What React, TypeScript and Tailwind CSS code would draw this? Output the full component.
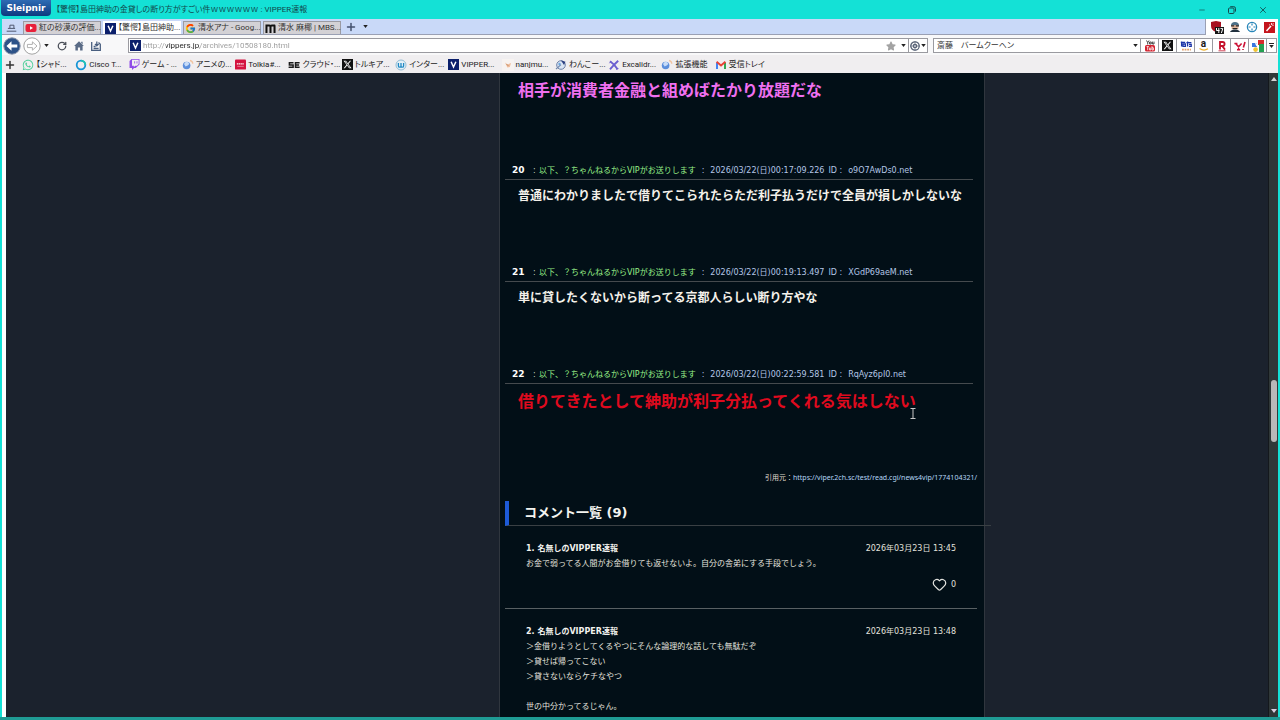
import React from 'react';
import clsx from 'clsx';
import { FcGoogle } from 'react-icons/fc';
import { FaTwitch, FaWhatsapp, FaStar } from 'react-icons/fa';
import { FaXTwitter } from 'react-icons/fa6';
import { Heart, Minus, Plus, RotateCw, X } from 'lucide-react';

type Tab = { title: string; icon: React.ReactNode; active?: boolean };
type Post = { no: number; date: string; id: string; text: string; tone: string };
type Comment = { no: number; date: string; lines: string[]; likes?: number };

function YouTubeIcon() {
  return (
    <svg viewBox="0 0 12 12" className="size-3 shrink-0">
      <rect x="0.5" y="2" width="11" height="8" rx="2" fill="#e8203a" />
      <path d="M5 4.2v3.6L8 6z" fill="#fff" />
    </svg>
  );
}

function VipperIcon() {
  return (
    <svg viewBox="0 0 12 12" className="size-[11px] shrink-0">
      <rect width="12" height="12" fill="#0b1f6b" />
      <path d="M3.4 3 6 8.8l2.6-5.8" fill="none" stroke="#fff" strokeWidth="1.6" />
    </svg>
  );
}

function MbsIcon() {
  return (
    <svg viewBox="0 0 12 12" className="size-[11px] shrink-0">
      <path d="M1.6 11V2.5M6 11V4M10.4 11V2.5M.5 2.6h4.2q1.3 0 1.3 1.6 0-1.6 1.5-1.6h3.6" fill="none" stroke="#111" strokeWidth="2.2" />
    </svg>
  );
}

function RingIcon() {
  return (
    <svg viewBox="0 0 12 12" className="size-3 shrink-0">
      <circle cx="6" cy="6" r="4.3" fill="none" stroke="#1695d6" strokeWidth="1.8" />
      <path d="M6 1.7a4.3 4.3 0 0 1 4.3 4.3" fill="none" stroke="#1fc3b4" strokeWidth="1.8" />
    </svg>
  );
}

function GlobeIcon() {
  return (
    <svg viewBox="0 0 12 12" className="size-3 shrink-0">
      <circle cx="4.6" cy="6.5" r="3.8" fill="#5c8fdc" />
      <path d="M2 5q2-3.6 4.4-1.6T3.6 7.6z" fill="#c7dcf8" />
      <path d="M8 1.5q2.5.4 2.8 3.2" fill="none" stroke="#f2c4a0" strokeWidth="1.3" />
    </svg>
  );
}

function RedCardIcon() {
  return (
    <svg viewBox="0 0 12 12" className="size-[11px] shrink-0">
      <rect y="0.5" width="12" height="11" rx="1" fill="#d4123f" />
      <path d="M2 5.2h8" stroke="#fff" strokeWidth="1.4" strokeDasharray="1.5 .5" />
      <path d="M2.5 8h7" stroke="#f0a0b4" strokeWidth=".8" />
    </svg>
  );
}

function ScIcon() {
  return (
    <svg viewBox="0 0 12 12" className="size-3 shrink-0">
      <path d="M5.5 3.8H1.4v2.1h3.7v2.4H.6M11.6 3.8H7.5v4.5h4.1M7.5 6h3.6" fill="none" stroke="#1a1a1a" strokeWidth="1.5" />
    </svg>
  );
}

function XIcon() {
  return (
    <span className="flex size-[11px] shrink-0 items-center justify-center bg-[#111]">
      <FaXTwitter className="size-[9px] text-white" />
    </span>
  );
}

function WIcon() {
  return (
    <svg viewBox="0 0 12 12" className="size-3 shrink-0">
      <circle cx="6" cy="6" r="5" fill="#e4f1f8" stroke="#93bcd4" />
      <path d="M3.4 4v3q0 1.2 1.3 1.2T6 7V4M6 7q0 1.2 1.3 1.2T8.6 7V4" fill="none" stroke="#2189c4" strokeWidth="1.3" />
    </svg>
  );
}

function FoxIcon() {
  return (
    <svg viewBox="0 0 12 12" className="size-3 shrink-0">
      <rect width="12" height="12" fill="#f7f3f1" />
      <path d="M3 3.5l2.5 2L9 4 7.8 8 5.4 8.6z" fill="#f0bd9c" />
      <path d="M4.5 5.4l2 1.2" stroke="#b8845c" strokeWidth=".9" />
    </svg>
  );
}

function DogIcon() {
  return (
    <svg viewBox="0 0 12 12" className="size-3 shrink-0">
      <circle cx="6" cy="6" r="4.3" fill="#dbe5f3" stroke="#6b7fa8" />
      <path d="M6 1.5l4.5 1.2L9 6z" fill="#2b3f80" />
      <path d="M1 10l5-4.4" stroke="#7288ad" strokeWidth="1.2" />
      <circle cx="4.5" cy="5" r="1.2" fill="#6ca6e0" />
    </svg>
  );
}

function ExcalidrawIcon() {
  return (
    <svg viewBox="0 0 12 12" className="size-3 shrink-0">
      <path d="M2 2.2q4 2.5 7.6 8M10.2 1.8Q6 5.6 2 10.4" fill="none" stroke="#6b5fd0" strokeWidth="1.9" />
      <path d="M1.5 4.2l1.6-2M8 10.2l2.4-.6" stroke="#6b5fd0" strokeWidth="1" />
    </svg>
  );
}

function GmailIcon() {
  return (
    <svg viewBox="0 0 12 12" className="size-3 shrink-0">
      <path d="M2 10V3.4" stroke="#4285f4" strokeWidth="2" />
      <path d="M10 10V3.4" stroke="#34a853" strokeWidth="2" />
      <path d="M1.6 2.8L6 6.4l4.4-3.6" fill="none" stroke="#ea4335" strokeWidth="2" />
    </svg>
  );
}

function Caret() {
  return (
    <svg viewBox="0 0 6 4" className="h-[3px] w-[5px] shrink-0">
      <path d="M0 0h6L3 4z" fill="#222" />
    </svg>
  );
}

const tabs: Tab[] = [
  { title: '紅の砂漠の評価...', icon: <YouTubeIcon /> },
  { title: '【驚愕】島田紳助...', icon: <VipperIcon />, active: true },
  { title: '清水アナ - Goog...', icon: <FcGoogle className="size-[11px] shrink-0" /> },
  { title: '清水 麻椰 | MBS...', icon: <MbsIcon /> },
];

const bookmarks = [
  { label: '【シャド...', icon: <FaWhatsapp className="size-3 shrink-0 text-[#4fcf9a]" /> },
  { label: 'Cisco T...', icon: <RingIcon /> },
  { label: 'ゲーム - ...', icon: <FaTwitch className="size-[11px] shrink-0 text-[#8f4be8]" /> },
  { label: 'アニメの...', icon: <GlobeIcon /> },
  { label: 'Tolkia#...', icon: <RedCardIcon /> },
  { label: 'クラウド・...', icon: <ScIcon /> },
  { label: 'トルキア...', icon: <XIcon /> },
  { label: 'インター...', icon: <WIcon /> },
  { label: 'VIPPER...', icon: <VipperIcon /> },
  { label: 'nanjmu...', icon: <FoxIcon /> },
  { label: 'わんこー...', icon: <DogIcon /> },
  { label: 'Excalidr...', icon: <ExcalidrawIcon /> },
  { label: '拡張機能', icon: <GlobeIcon /> },
  { label: '受信トレイ', icon: <GmailIcon /> },
];

const engines = [
  {
    name: 'YouTube',
    icon: (
      <svg viewBox="0 0 12 12" className="size-3">
        <path d="M2.5.5l1.2 2v2M5 .5L3.7 2.5M5.6 2h1.6v2H5.6zM8.4 1.6V4h1.6V1.6" fill="none" stroke="#333" strokeWidth=".9" />
        <rect x="1" y="5" width="10" height="6.6" rx="1.6" fill="#d3222f" />
        <path d="M2.6 6.6h2.2M3.7 6.6v3.6M5.6 7.6v2.4h1.2V7.6M8 6.2V10h1.4V7.8H8" fill="none" stroke="#fff" strokeWidth=".8" />
      </svg>
    ),
  },
  { name: 'X', icon: <XIcon /> },
  {
    name: '価格.com',
    icon: (
      <svg viewBox="0 0 12 12" className="size-3">
        <path d="M.8 2.4h4.4M1.6 1.4v5.2M3 4h2.4v2.4H3zM6.4 2.6h5M7.6 1.4v5.2M9 4.4h2.2v2H9" fill="none" stroke="#1c35a8" strokeWidth="1.3" />
        <path d="M2 9.6h9" stroke="#e2a06c" strokeWidth="1.8" strokeDasharray="1.8 .8" />
      </svg>
    ),
  },
  {
    name: 'Amazon',
    icon: (
      <span className="flex flex-col items-center">
        <b className="-mt-px text-[10px] leading-[8px] text-[#1b1b1b]">a</b>
        <svg viewBox="0 0 10 3" className="h-[3px] w-[10px]">
          <path d="M.5.6Q5 3.4 9 .8" fill="none" stroke="#eeb02c" strokeWidth="1.2" />
        </svg>
      </span>
    ),
  },
  {
    name: '楽天',
    icon: (
      <svg viewBox="0 0 12 12" className="size-3">
        <path d="M4 9.6V2h2.6q2 0 2 2T6.6 6H4M6.2 6L9 9.6" fill="none" stroke="#c4102a" strokeWidth="1.8" />
        <path d="M2.5 10.8h7" stroke="#c4102a" strokeWidth=".8" />
      </svg>
    ),
  },
  {
    name: 'Yahoo!',
    icon: (
      <svg viewBox="0 0 12 12" className="size-3">
        <path d="M.4 3.4h3M1.6 3.4l3 3.4L7.6 3.4M4.6 6.6v3M3 9.7h3.2" fill="none" stroke="#cc1236" strokeWidth="1.5" />
        <path d="M11 2L9.4 7.4M9 9v1" stroke="#cc1236" strokeWidth="1.6" />
      </svg>
    ),
  },
  {
    name: 'Google',
    icon: (
      <svg viewBox="0 0 12 12" className="size-3">
        <rect x="6" y="0" width="6" height="5" fill="#d82c2c" />
        <rect x="7" y="4" width="5" height="8" fill="#22a052" />
        <rect x="0" y="3" width="5" height="4" fill="#3a78e0" />
        <circle cx="3.6" cy="9.6" r="2.3" fill="#f0c330" />
        <path d="M5.6 1.2q-2 .6-1.6 2.6T7 7" fill="none" stroke="#fff" strokeWidth="1.4" />
      </svg>
    ),
  },
];

const smallText = 'pb-[57px] text-xs leading-[18px]';
const largeText = 'pb-[59px] text-base leading-[21px]';

const posts: Post[] = [
  {
    no: 20,
    date: '2026/03/22(日)00:17:09.226',
    id: 'o9O7AwDs0.net',
    text: '普通にわかりましたで借りてこられたらただ利子払うだけで全員が損しかしないな',
    tone: clsx(smallText, 'text-[#f4f1ea]'),
  },
  {
    no: 21,
    date: '2026/03/22(日)00:19:13.497',
    id: 'XGdP69aeM.net',
    text: '単に貸したくないから断ってる京都人らしい断り方やな',
    tone: clsx(smallText, 'text-[#f4f1ea]'),
  },
  {
    no: 22,
    date: '2026/03/22(日)00:22:59.581',
    id: 'RqAyz6pI0.net',
    text: '借りてきたとして紳助が利子分払ってくれる気はしない',
    tone: clsx(largeText, 'text-[#e00a1e]'),
  },
];

const comments: Comment[] = [
  {
    no: 1,
    date: '2026年03月23日 13:45',
    lines: ['お金で弱ってる人間がお金借りても返せないよ。自分の舎弟にする手段でしょう。'],
    likes: 0,
  },
  {
    no: 2,
    date: '2026年03月23日 13:48',
    lines: [
      '＞金借りようとしてくるやつにそんな論理的な話しても無駄だぞ',
      '＞貸せば帰ってこない',
      '＞貸さないならケチなやつ',
      '',
      '世の中分かってるじゃん。',
    ],
  },
];

function TitleBar() {
  return (
    <header className="flex h-[19px] shrink-0 items-center bg-[#14e1d6] text-[#12494d]">
      <button className="-mt-[3px] ml-px h-4 w-[50px] rounded-b-sm bg-linear-to-b from-[#2e6bb4] to-[#0d3a80] font-['DejaVu_Sans'] text-[9px] leading-4 font-bold text-white">
        Sleipnir
      </button>
      <h1 className="ml-[5px] text-[8px] leading-4 whitespace-nowrap">
        【驚愕】島田紳助の金貸しの断り方がすごい件ｗｗｗｗｗｗ : VIPPER速報
      </h1>
      <div className="ml-auto flex items-center gap-[22px] pr-3">
        <button aria-label="最小化">
          <Minus className="size-2" />
        </button>
        <button aria-label="元に戻す">
          <svg viewBox="0 0 8 8" className="size-2" fill="none" stroke="currentColor">
            <rect x="0.5" y="2" width="5.5" height="5.5" rx="1" />
            <path d="M2.2.7h3.6q1.7 0 1.7 1.7v3.2" />
          </svg>
        </button>
        <button aria-label="閉じる">
          <X className="size-[10px]" />
        </button>
      </div>
    </header>
  );
}

function TabBar() {
  return (
    <div className="flex h-4 shrink-0 bg-white">
      <nav className="flex flex-1 items-end border-r border-b border-[#9aa0b4] bg-[#c9d9f8] pl-1">
        <button aria-label="タブ一覧" className="mr-[2px] mb-[2px] w-[15px]">
          <svg viewBox="0 0 12 10" className="h-2 w-[11px]" fill="none" stroke="#4a536b" strokeWidth="1.2">
            <path d="M4 5V1.5h5V5M1.5 5.5h9M0 9h12" />
          </svg>
        </button>
        <div className="flex gap-[2px]">
          {tabs.map((tab) => (
            <button
              key={tab.title}
              className={clsx(
                'flex h-[13px] w-[78px] items-center gap-[2px] border border-b-0 px-px text-[8px] leading-3 whitespace-nowrap text-[#333]',
                tab.active ? 'border-white bg-white' : 'border-[#9b9ba3] bg-[#d3d1d5]',
              )}
            >
              {tab.icon}
              {tab.title}
            </button>
          ))}
        </div>
        <button aria-label="新しいタブ" className="ml-1 self-center">
          <Plus className="size-3 text-[#44516e]" strokeWidth={3} />
        </button>
        <button aria-label="タブメニュー" className="ml-[6px] self-center">
          <Caret />
        </button>
      </nav>
      <div className="flex items-center gap-[6px] pr-[3px] pl-[5px]">
        <button aria-label="uBlock">
          <svg viewBox="0 0 13 13" className="size-[13px]">
            <path d="M0 1l5-1 5 1v4q0 4-5 6-5-2-5-6z" fill="#a81020" />
            <rect x="4" y="6" width="9" height="7" fill="#171717" />
            <path d="M5.5 7v2.5h3M7.8 7v5M9.5 7.6h2.3L10.4 12" fill="none" stroke="#fff" />
          </svg>
        </button>
        <button aria-label="プロフィール">
          <svg viewBox="0 0 10 10" className="size-[10px]">
            <path d="M1 3.6Q1 0 5 0t4 3.6z" fill="#4c7088" />
            <rect x="1.6" y="3.2" width="6.8" height="4" fill="#e2b59a" />
            <path d="M1 3.8h3.2M5.8 3.8H9M2.6 6.6h4.8" stroke="#222" strokeWidth="1.2" />
            <path d="M0 10q1-2.6 5-2.6t5 2.6z" fill="#20303e" />
          </svg>
        </button>
        <button aria-label="拡大">
          <svg viewBox="0 0 12 12" className="size-3" fill="none" stroke="#2886b8">
            <circle cx="6" cy="6" r="4.6" strokeWidth="1.3" />
            <path d="M6 2.6v2M6 7.4v2M2.6 6h2M7.4 6h2" strokeWidth="1.2" />
          </svg>
        </button>
        <button aria-label="ハイライト">
          <svg viewBox="0 0 11 11" className="size-[11px]">
            <rect width="11" height="11" fill="#c4141c" />
            <path d="M2.5 9L7 4" stroke="#fff" strokeWidth="1.5" />
            <path d="M7.5 1v2M9.8 3.2H8M9.5 1.2L8.3 2.4M5 2.5l1 .8" stroke="#fff" strokeWidth=".8" />
          </svg>
        </button>
      </div>
    </div>
  );
}

function NavArrow({ primary }: { primary?: boolean }) {
  return (
    <svg viewBox="0 0 18 18" className={clsx('size-[18px]', !primary && 'rotate-180')}>
      <circle cx="9" cy="9" r="8.2" fill={primary ? '#2d5288' : '#fff'} stroke={primary ? '#8792a8' : '#a0a0a0'} />
      <path
        d={primary ? 'M3.5 9l5-4.8v3.2h5.8v3.2H8.5v3.2z' : 'M4 9l4.6-4.2v2.6h5v3.2h-5v2.6z'}
        fill="#fff"
        stroke={primary ? 'none' : '#b0b0b0'}
      />
    </svg>
  );
}

function AddressBar() {
  return (
    <div className="flex h-5 shrink-0 items-center bg-[#f8f8f9] pt-px pr-px pl-px">
      <button aria-label="戻る" className="mr-[2px]">
        <NavArrow primary />
      </button>
      <button aria-label="進む">
        <NavArrow />
      </button>
      <button aria-label="履歴" className="ml-[3px] flex">
        <Caret />
      </button>
      <button aria-label="再読み込み" className="ml-2">
        <RotateCw className="size-[10px] text-[#4a4f58]" strokeWidth={3} />
      </button>
      <button aria-label="ホーム" className="ml-[7px]">
        <svg viewBox="0 0 10 10" className="size-[10px]" fill="#5a6b86">
          <path d="M5 .2L9.9 5H8.6v4.6H6.1V6.6H3.9v3H1.4V5H.1z" />
          <path d="M7.2.8h1.4v2.4L7.2 2z" />
        </svg>
      </button>
      <button aria-label="保存" className="mr-[27px] ml-[7px]">
        <svg viewBox="0 0 10 10" className="size-[10px]" fill="none" stroke="#4a5f80" strokeWidth="1.3">
          <path d="M.7 1v8.3h8.6V3.2L7.5 1.5" />
          <path d="M2.6 7.5h5M2.6 5.5h2M5.8.5v4M4 3l1.8 1.8L7.6 3" />
        </svg>
      </button>

      <div className="flex h-[15px] min-w-0 flex-1 items-center border border-[#9a9aa0] bg-white pl-px">
        <VipperIcon />
        <input
          aria-label="アドレス"
          defaultValue="http://vippers.jp/archives/10508180.html"
          className="ml-[2px] min-w-0 flex-1 bg-[linear-gradient(90deg,#9a9a9a_23px,#222_23px,#222_57px,#9a9a9a_57px)] bg-clip-text text-[8px] leading-3 text-transparent outline-none"
        />
        <button aria-label="ブックマークに追加">
          <FaStar className="size-[10px] text-[#a3a3a3]" />
        </button>
        <button aria-label="ブックマーク一覧" className="mr-[2px] ml-[5px]">
          <Caret />
        </button>
        <button aria-label="エンジン切替" className="flex h-full items-center gap-px border-l border-[#9a9aa0] px-px">
          <svg viewBox="0 0 10 10" className="size-[10px]" fill="none" stroke="#5a6478">
            <circle cx="5" cy="5" r="4.2" strokeWidth="1.3" />
            <circle cx="5" cy="5" r="1.6" strokeWidth="1.5" />
            <path d="M5 0v3M5 7v3M0 5h3M7 5h3" strokeWidth=".7" />
          </svg>
          <Caret />
        </button>
      </div>

      <div className="ml-[5px] flex h-[15px] w-[27%] items-center border border-[#9a9aa0] bg-white">
        <input
          aria-label="検索"
          defaultValue="斎藤　バームクーヘン"
          className="ml-[3px] min-w-0 flex-1 text-[8px] leading-3 text-[#333] outline-none"
        />
        <button aria-label="検索履歴" className="mr-[2px]">
          <Caret />
        </button>
        {engines.map((engine) => (
          <button
            key={engine.name}
            aria-label={engine.name}
            className="flex h-full w-[18px] shrink-0 items-center justify-center border-l border-[#9a9aa0]"
          >
            {engine.icon}
          </button>
        ))}
        <button
          aria-label="その他"
          className="flex h-full w-[10px] shrink-0 flex-col items-center justify-center gap-px border-l border-[#9a9aa0]"
        >
          <span className="h-px w-[5px] bg-[#222]" />
          <Caret />
        </button>
      </div>
    </div>
  );
}

function BookmarkBar() {
  return (
    <nav className="flex h-[18px] shrink-0 items-center bg-[#f0eef0] pt-px pl-[2px]">
      <button aria-label="ブックマークを追加">
        <Plus className="size-3 text-[#333]" strokeWidth={3} />
      </button>
      <div className="ml-[6px] grid w-[746px] grid-cols-14">
        {bookmarks.map((item) => (
          <a key={item.label} href="#" className="flex items-center gap-[2px] text-[8px] leading-4 whitespace-nowrap text-[#222]">
            {item.icon}
            {item.label}
          </a>
        ))}
      </div>
    </nav>
  );
}

function PostBody({ tone, children }: { tone: string; children: React.ReactNode }) {
  return <p className={clsx('pt-[7px] pl-[13px] font-bold whitespace-nowrap', tone)}>{children}</p>;
}

function PostItem({ post }: { post: Post }) {
  return (
    <article>
      <div className="mr-1 flex h-5 items-center border-b border-[#454a4e] pt-[2px] pl-[7px] text-[8px] whitespace-pre text-[#b4c6e6]">
        <b className="w-[21px] text-[9px] text-white">{post.no}</b>
        <span className="w-[6px] text-[#c8d8c8]">:</span>
        <span className="text-[#98f088]">以下、？ちゃんねるからVIPがお送りします</span>
        <span className="ml-[6px]">:</span>
        <span className="ml-[6px]">{post.date}</span>
        <span className="ml-1">ID :</span>
        <span className="ml-[6px]">{post.id}</span>
      </div>
      <PostBody tone={post.tone}>{post.text}</PostBody>
    </article>
  );
}

function CommentItem({ comment }: { comment: Comment }) {
  return (
    <li className="border-b border-[#596063] px-[21px] py-[15px] text-[8px] leading-[15px] text-[#e2e2de]">
      <div className="flex justify-between">
        <b className="text-[#f2f2ee]">{comment.no}. 名無しのVIPPER速報</b>
        <time>{comment.date}</time>
      </div>
      {comment.lines.map((line, i) => (
        <p key={i} className="min-h-[15px]">
          {line}
        </p>
      ))}
      {comment.likes !== undefined && (
        <button className="mt-[5px] mb-px ml-auto flex h-4 items-center gap-1">
          <Heart className="size-[15px]" strokeWidth={2} />
          {comment.likes}
        </button>
      )}
    </li>
  );
}

function ScrollBar() {
  return (
    <div className="flex w-[10px] shrink-0 flex-col items-center border-l border-[#14181c] bg-[#303838] py-1">
      <svg viewBox="0 0 6 4" className="h-1 w-[6px]">
        <path d="M0 4h6L3 0z" fill="#d4d4d4" />
      </svg>
      <div className="grow-[299]" />
      <div className="h-[62px] w-[6px] rounded-sm bg-[#b8b8b8]" />
      <div className="grow-[267]" />
      <svg viewBox="0 0 6 4" className="h-1 w-[6px]">
        <path d="M0 0h6L3 4z" fill="#d8cfe0" />
      </svg>
    </div>
  );
}

export default function App() {
  return (
    <div className="flex h-screen flex-col overflow-hidden bg-[#14e1d6] font-[Roboto,'Noto_Sans_CJK_JP',sans-serif] leading-none [font-feature-settings:'palt']">
      <TitleBar />
      <div className="mr-[2px] ml-[2px] flex min-h-0 flex-1 flex-col bg-white">
        <TabBar />
        <AddressBar />
        <BookmarkBar />
        <div className="ml-1 flex min-h-0 flex-1 bg-[#1b222d] font-['DejaVu_Sans','Noto_Sans_CJK_JP',sans-serif] [font-feature-settings:normal]">
          <div className="min-w-0 flex-1 overflow-hidden">
            <main className="relative ml-[493px] min-h-full w-[486px] border-x border-[#30363e] bg-[#020f17] pr-[7px] pl-[5px]">
              <PostBody tone={clsx(largeText, 'text-[#f070f0]')}>相手が消費者金融と組めばたかり放題だな</PostBody>
              {posts.map((post) => (
                <PostItem key={post.no} post={post} />
              ))}
              <p className="text-right font-['Noto_Sans','Noto_Sans_CJK_JP',sans-serif] text-[7px] leading-[14px] whitespace-nowrap text-[#e0ddd0]">
                引用元：
                <a href="#" className="text-[#b5d6f5]">
                  https://viper.2ch.sc/test/read.cgi/news4vip/1774104321/
                </a>
              </p>
              <h2 className="mt-4 -mr-[14px] flex h-[25px] items-center border-b border-l-4 border-b-[#3a4044] border-l-[#1d5ad8] pb-[2px] pl-[15px] text-[13px] font-bold text-[#f4f4f0]">
                コメント一覧 (9)
              </h2>
              <ul>
                {comments.map((comment) => (
                  <CommentItem key={comment.no} comment={comment} />
                ))}
              </ul>
              {/* text cursor hovering over the last post */}
              <svg viewBox="0 0 6 11" className="absolute top-[335px] left-[410px] h-[11px] w-[6px]" fill="none" stroke="#c8c8c8">
                <path d="M.5.5H5.5M3 .5v10M.5 10.5h5" />
              </svg>
            </main>
          </div>
          <ScrollBar />
        </div>
      </div>
      <div className="h-[3px] shrink-0 bg-[#1f9b94]" />
    </div>
  );
}
